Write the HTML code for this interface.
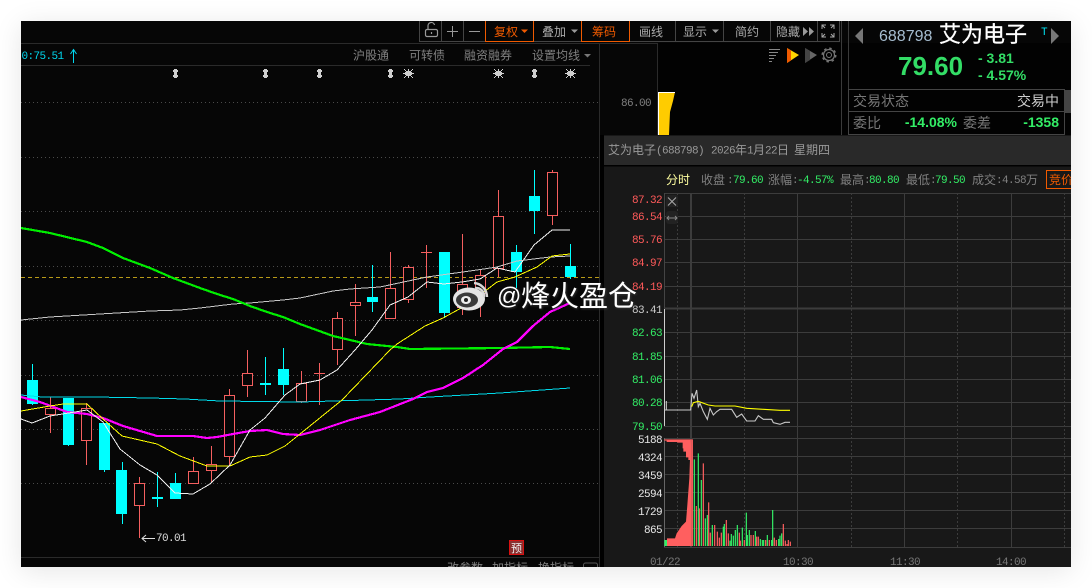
<!DOCTYPE html>
<html><head><meta charset="utf-8"><style>
html,body{margin:0;padding:0;background:#fff;width:1092px;height:588px;overflow:hidden}
#s{position:absolute;left:21px;top:21px;width:1050px;height:546px;box-shadow:0 4px 26px rgba(0,0,0,.1)}
svg{position:absolute;left:0;top:0}
text{font-family:"WenQuanYi Zen Hei","Noto Sans CJK SC",sans-serif;font-size:12px;fill:#808080}
.m{font-family:"Liberation Mono",monospace;font-size:11px;letter-spacing:-.6px}
.r{fill:#ff5a5a}.g{fill:#33ee66}.w{fill:#e8e8e8}.e{text-anchor:end}
.t{fill:#aaa;font-size:12px;text-anchor:middle}.o{fill:#f05a00}
.cr{shape-rendering:crispEdges}
</style></head><body><div id="s"></div>
<svg width="1092" height="588" viewBox="0 0 1092 588">
<defs><clipPath id="c"><rect x="21" y="21" width="1050" height="546"/></clipPath></defs>
<g clip-path="url(#c)">
<rect x="21" y="21" width="1050" height="546" fill="#060606"/>
<rect x="657" y="43" width="415" height="92" fill="#020202"/>
<g class="cr" stroke="#2a2a2a" fill="none">
<path d="M21 43.5H657M21 65.5H590M599.5 43V567M657.5 43V135M21 557.5H603"/>
<path d="M841.5 21V135M848.5 21V135" stroke="#3a3a3a"/>
</g>
<g stroke="#4a4a4a" stroke-dasharray="1 3" class="cr">
<path d="M21 102.5H600M21 157.5H600M21 211.5H600M21 266.5H600M21 320.5H600M21 375.5H600M21 429.5H600M21 483.5H600"/>
</g>
<path d="M21 277.5H600" stroke="#b89a18" stroke-dasharray="4 3" class="cr"/>

<!-- toolbar -->
<g class="cr" fill="none" stroke="#444">
<path d="M419.5 21V41.5H840M441.5 21V41M463.5 21V41M485.5 21V41M533.5 21V41M581.5 21V41M629.5 21V41M675.5 21V41M723.5 21V41M770.5 21V41M817.5 21V41M839.5 21V41"/>
<path d="M485.5 21V41.5H533.5V21M581.5 21V41.5H629.5V21" stroke="#f05a00"/>
</g>
<g fill="none" stroke="#999" stroke-width="1.2">
<rect x="425.5" y="29.5" width="12" height="7" rx="1.5"/>
<path d="M428 29V25.5a3.3 3.3 0 0 1 6.5-.5"/><path d="M431.5 32v2"/>
<path d="M447 31.500H458M452.500 26V37M469 31.500H480" stroke-width="1"/>
<path d="M822 29v-4h4M830 25h4v4M822 33v4h4M834 33v4h-4M822 25l3 3M834 25l-3 3M822 37l3-3M834 37l-3-3" stroke-width="1" stroke="#aaa"/>
</g>
<text class="t o" x="506" y="36">复权</text><path d="M521 29.500h7l-3.500 3.500z" fill="#f05a00"/>
<text class="t" x="554" y="36">叠加</text><path d="M571 29.500h7l-3.500 3.500z" fill="#999"/>
<text class="t o" x="604" y="36">筹码</text>
<text class="t" x="651" y="36">画线</text>
<text class="t" x="695" y="36">显示</text><path d="M712 29.500h7l-3.500 3.500z" fill="#999"/>
<text class="t" x="747" y="36">简约</text>
<text class="t" x="788" y="36">隐藏</text><path d="M803 27v9l5-4.500zM809 27v9l5-4.500z" fill="#999"/>

<!-- sub header -->
<text class="m" x="21.500" y="59" style="fill:#00d8f0">0:75.51</text>
<path d="M73.500 49.500V63M70.500 54l3-4.500l3 4.500" stroke="#00d8f0" fill="none"/>
<text x="353" y="59.500">沪股通</text><text x="409" y="59.500">可转债</text><text x="464" y="59.500">融资融券</text><text x="532" y="59.500">设置均线</text>
<path d="M584 54h7l-3.500 3.500z" fill="#777"/>

<!-- markers -->
<g fill="#cfcfcf" class="cr">
<path id="d" d="M173 70h1v-1h3v1h1v2h-1v3h1v2h-1v1h-3v-1h-1v-2h1v-3h-1z"/>
<path d="M263 70h1v-1h3v1h1v2h-1v3h1v2h-1v1h-3v-1h-1v-2h1v-3h-1zM317 70h1v-1h3v1h1v2h-1v3h1v2h-1v1h-3v-1h-1v-2h1v-3h-1zM388 70h1v-1h3v1h1v2h-1v3h1v2h-1v1h-3v-1h-1v-2h1v-3h-1zM532 70h1v-1h3v1h1v2h-1v3h1v2h-1v1h-3v-1h-1v-2h1v-3h-1z"/>
<path d="M406 71h5v5h-5zM405 72h7v3h-7zM404 69h1v1h1v1h-1v-1h-1zM412 69h1v1h-1v1h-1v-1h1zM408 69h1v9h-1zM404 77h1v-1h1v1h-1v1h-1zM412 77h1v1h-1v-1h-1v-1h1zM403 73h11v1h-11z"/>
<path d="M496 71h5v5h-5zM495 72h7v3h-7zM494 69h1v1h1v1h-1v-1h-1zM502 69h1v1h-1v1h-1v-1h1zM498 69h1v9h-1zM494 77h1v-1h1v1h-1v1h-1zM502 77h1v1h-1v-1h-1v-1h1zM493 73h11v1h-11z"/>
<path d="M568 71h5v5h-5zM567 72h7v3h-7zM566 69h1v1h1v1h-1v-1h-1zM574 69h1v1h-1v1h-1v-1h1zM570 69h1v9h-1zM566 77h1v-1h1v1h-1v1h-1zM574 77h1v1h-1v-1h-1v-1h1zM565 73h11v1h-11z"/>
</g>

<!-- candles -->
<g class="cr" stroke="#00ffff" fill="none">
<path d="M32.500 364V405M68.500 398V446M104.500 423V472M122.500 462V524M157.500 472V507M175.500 473V499M265.500 357V395M283.500 348V395M372.500 265V312M444.500 252V318M516.500 245V288M534.500 170V234M570.500 244V279"/>
</g>
<g class="cr" fill="#00ffff">
<rect x="27" y="380" width="11" height="24"/><rect x="63" y="398" width="11" height="47"/><rect x="99" y="423" width="11" height="47"/><rect x="116" y="470" width="11" height="44"/><rect x="152" y="497" width="11" height="2"/><rect x="170" y="483" width="11" height="16"/><rect x="260" y="383" width="11" height="2"/><rect x="278" y="369" width="11" height="16"/><rect x="367" y="297" width="11" height="5"/><rect x="439" y="252" width="11" height="61"/><rect x="511" y="252" width="11" height="20"/><rect x="529" y="196" width="11" height="15"/><rect x="565" y="266" width="11" height="11"/>
</g>
<g class="cr" stroke="#f55f5f" fill="none">
<path d="M50.500 397V433M86.500 403V465M139.500 477V538M193.500 457V483M211.500 446V483M229.500 389V465M247.500 350V397M301.500 371V403M319.500 363V405M337.500 312V365M355.500 284V336M390.500 252V318M408.500 265V303M426.500 245V288M462.500 234V315M480.500 270V317M498.500 190V277M552.500 170V225M314 373.500H325M421 252.500H432"/>
</g>
<g class="cr" stroke="#f55f5f" fill="#060606">
<rect x="45.500" y="408.500" width="10" height="6"/><rect x="81.500" y="408.500" width="10" height="32"/><rect x="134.500" y="483.500" width="10" height="22"/><rect x="188.500" y="471.500" width="10" height="12"/><rect x="206.500" y="464.500" width="10" height="6"/><rect x="224.500" y="395.500" width="10" height="61"/><rect x="242.500" y="373.500" width="10" height="12"/><rect x="296.500" y="383.500" width="10" height="18"/><rect x="332.500" y="318.500" width="10" height="31"/><rect x="350.500" y="302.500" width="10" height="3"/><rect x="385.500" y="288.500" width="10" height="30"/><rect x="403.500" y="267.500" width="10" height="32"/><rect x="457.500" y="284.500" width="10" height="23"/><rect x="475.500" y="275.500" width="10" height="18"/><rect x="493.500" y="216.500" width="10" height="52"/><rect x="547.500" y="172.500" width="10" height="43"/>
</g>

<!-- MA lines -->
<g fill="none" class="cr">
<polyline stroke="#00d8e8" points="21,395 42,397 95,397 150,398 185,399 220,401 300,402 400,399 430,397 500,393 570,388"/>
<polyline stroke="#c8c8c8" points="21,320 50,317 100,314 150,311 180,310 200,308 233,304 250,303 283,300 300,298 333,291 350,289 380,287 427,277 477,270 497,267 517,261 550,257 570,256"/>
<polyline stroke="#00ee00" stroke-width="2.200" points="21,228 50,233 87,242 103,248 123,258 150,268 173,278 200,288 217,294 233,299 250,306 267,312 283,317 300,324 333,336 350,340 367,344 397,347 410,349 500,348 550,347 570,349"/>
<polyline stroke="#ff00ff" stroke-width="2.200" points="21,397 40,402 67,412 87,414 103,418 123,426 157,436 193,436 207,438 217,437 233,434 250,431 267,430 283,434 300,435 320,430 350,420 380,412 413,399 427,392 443,388 463,378 483,365 503,349 517,342 533,326 550,312 570,303"/>
<polyline stroke="#ffff00" points="21,411 50,406 63,404 87,404 103,419 122,436 157,444 180,456 207,466 230,466 250,457 267,455 285,446 300,434 342,400 390,350 397,344 425,326 443,318 463,307 480,295 497,282 515,277 537,267 552,256 570,254"/>
<polyline stroke="#f0f0f0" points="21,419 32,423 50,416 75,412 87,410 103,422 120,449 140,465 157,475 175,493 193,494 210,484 230,465 250,430 265,418 285,395 300,384 320,380 337,370 355,350 372,330 390,305 408,297 427,282 444,284 462,282 480,279 497,268 515,272 534,245 552,230 570,230"/>
</g>
<path d="M142 538.500H155M146 535l-4 3.500l4 3.500" stroke="#ddd" fill="none"/>
<text class="m" x="156" y="541" style="fill:#ddd">70.01</text>
<text class="m" x="621" y="106">86.00</text>
<path d="M658 92H675L673 101L670 112L669 135H658Z" fill="#ffcc00"/>
<path d="M658.500 135V92.500H675" stroke="#fff" fill="none" class="cr"/>
<rect x="509.500" y="540.500" width="14" height="14" fill="#8a2f2f" stroke="#d81010" class="cr"/>
<text x="511" y="552" style="font-size:11px;fill:#eee">预</text>
<text x="447" y="572">改参数</text><text x="492" y="572">加指标</text><text x="538" y="572">换指标</text>
<rect x="583.500" y="563" width="14" height="12" rx="2" fill="none" stroke="#555"/>

<!-- top right icons -->
<path d="M769 49.500H780M769 52.500H778M769 55.500H776M769 58.500H774M769 61.500H772" stroke="#888" class="cr"/>
<path d="M787 48L799 55L787 63Z" fill="#ffd400"/><path d="M787 48L791 50.500V60.500L787 63Z" fill="#f05a00"/>
<path d="M805 48L817 55L805 63Z" fill="#666"/><path d="M805 48L810 51V60L805 63Z" fill="#444"/>
<g fill="none" stroke="#777"><circle cx="829" cy="55" r="5.500" stroke-width="1.200"/><circle cx="829" cy="55" r="6.800" stroke-width="1.400" stroke-dasharray="2.500 2.840"/><circle cx="829" cy="55" r="2.500"/></g>

<!-- right quote panel -->
<path d="M863 28V44L855 36Z" fill="#777"/><path d="M1051 28V44L1059 36Z" fill="#777"/>
<text x="879" y="41" style="font-family:'Liberation Sans',sans-serif;font-size:16px;fill:#a6bdd0">688798</text>
<text x="939" y="42" style="font-size:22px;fill:#fff;stroke:#fff;stroke-width:.3px">艾为电子</text>
<text x="1041" y="35" style="font-family:'Liberation Mono',monospace;font-size:11px;fill:#00e0f0">T</text>
<text x="898" y="75" style="font-family:'Liberation Sans',sans-serif;font-weight:700;font-size:26px;fill:#33dd66">79.60</text>
<text x="978" y="63" style="font-family:'Liberation Sans',sans-serif;font-weight:700;font-size:14px;fill:#33dd66">- 3.81</text>
<text x="978" y="80" style="font-family:'Liberation Sans',sans-serif;font-weight:700;font-size:14px;fill:#33dd66">- 4.57%</text>
<g class="cr" fill="none" stroke="#444"><rect x="848.500" y="89.500" width="216" height="45"/><path d="M848 111.500H1065"/></g>
<rect x="1065" y="90" width="6" height="23" fill="#444"/>
<text x="853" y="106" style="font-size:14px;fill:#777">交易状态</text>
<text x="1017" y="106" style="font-size:14px;fill:#ccc">交易中</text>
<text x="853" y="128" style="font-size:14px;fill:#777">委比</text>
<text x="963" y="128" style="font-size:14px;fill:#777">委差</text>
<text x="957" y="127" text-anchor="end" style="font-family:'Liberation Sans',sans-serif;font-weight:700;font-size:14px;fill:#33ee66">-14.08%</text>
<text x="1059" y="127" text-anchor="end" style="font-family:'Liberation Sans',sans-serif;font-weight:700;font-size:14px;fill:#33ee66">-1358</text>

<!-- popup -->
<rect x="600" y="135" width="4" height="432" fill="#000"/>
<rect x="604" y="135" width="467" height="432" fill="#181818"/>
<rect x="604" y="136" width="467" height="29" fill="#292929"/>
<rect x="604" y="165" width="467" height="1.500" fill="#000"/>
<text x="608" y="154" style="fill:#999">艾为电子</text>
<text class="m" x="656" y="153.500" style="fill:#999">(688798)</text>
<text class="m" x="711" y="153.500" style="fill:#999">2026</text><text x="735" y="154" style="fill:#999">年</text>
<text class="m" x="747" y="153.500" style="fill:#999">1</text><text x="753" y="154" style="fill:#999">月</text>
<text class="m" x="765" y="153.500" style="fill:#999">22</text><text x="777" y="154" style="fill:#999">日</text>
<text x="794" y="154" style="fill:#999">星期四</text>
<text x="666" y="184" style="fill:#ffffa0">分时</text>
<text x="701" y="184">收盘</text><text class="m" x="727" y="183">:</text><text class="m g" x="733" y="183">79.60</text>
<text x="768" y="184">涨幅</text><text class="m" x="792" y="183">:</text><text class="m g" x="797" y="183">-4.57%</text>
<text x="840" y="184">最高</text><text class="m" x="864" y="183">:</text><text class="m g" x="869" y="183">80.80</text>
<text x="906" y="184">最低</text><text class="m" x="930" y="183">:</text><text class="m g" x="935" y="183">79.50</text>
<text x="972" y="184">成交</text><text class="m" x="996" y="183">:4.58</text><text x="1026" y="184">万</text>
<rect x="1046.500" y="170.500" width="30" height="18" fill="none" stroke="#f05a00" class="cr"/>
<text x="1049" y="184" style="fill:#f05a00">竞价</text>

<g class="cr" stroke="#3c3c3c" fill="none">
<path d="M664 193.500H1071M664 216.500H1071M664 239.500H1071M664 262.500H1071M664 286.500H1071M664 332.500H1071M664 356.500H1071M664 379.500H1071M664 402.500H1071M664 426.500H1071M664 438.500H1071M664 456.500H1071M664 474.500H1071M664 492.500H1071M664 510.500H1071M664 528.500H1071M664 547.500H1071"/>
<path d="M664 308.500H1071" stroke-width="2"/>
<path d="M690.500 193V547M691.500 193V547M797.500 193V547M904.500 193V547M1011.500 193V547"/>
<path d="M677.500 193V547M744.500 193V547M851.500 193V547M957.500 193V547M1064.500 193V547" stroke-dasharray="2 2"/>
<path d="M664.500 193V308" stroke="#444"/><path d="M664.500 309V426" stroke="#cfcfcf"/><path d="M664.500 438V547" stroke="#666"/>
</g>
<rect x="666" y="195" width="12" height="12" rx="2" fill="#222"/>
<path d="M668 197.500L676 205.500M676 197.500L668 205.500" stroke="#aaa"/>
<rect x="666" y="211" width="12" height="13" rx="3" fill="#222"/>
<path d="M667 218H677M669 216l-2 2l2 2M675 216l2 2l-2 2" stroke="#888" fill="none"/>

<text class="m e r" x="662" y="203">87.32</text><text class="m e r" x="662" y="220">86.54</text><text class="m e r" x="662" y="243">85.76</text><text class="m e r" x="662" y="266">84.97</text><text class="m e r" x="662" y="290">84.19</text>
<text class="m e" x="662" y="313" style="fill:#ccc">83.41</text>
<text class="m e g" x="662" y="336">82.63</text><text class="m e g" x="662" y="360">81.85</text><text class="m e g" x="662" y="383">81.06</text><text class="m e g" x="662" y="406">80.28</text><text class="m e g" x="662" y="430">79.50</text>
<text class="m e w" x="662" y="443">5188</text><text class="m e w" x="662" y="461">4324</text><text class="m e w" x="662" y="479">3459</text><text class="m e w" x="662" y="497">2594</text><text class="m e w" x="662" y="515">1729</text><text class="m e w" x="662" y="533">865</text>
<text class="m" x="650" y="565" style="fill:#777">01/22</text><text class="m" x="783" y="565" style="fill:#777">10:30</text><text class="m" x="890" y="565" style="fill:#777">11:30</text><text class="m" x="996" y="565" style="fill:#777">14:00</text>

<!-- intraday -->
<g transform="translate(600,370) scale(.33333)" fill="none">
<path d="M193 120H199V93V120H272V120L276 70L282 85L290 60L295 110L300 100L310 125L322 148L330 115L340 135L350 125L360 118H395L410 142L425 132L440 153H465L475 137L490 148H515L520 158L540 163L555 157H570" stroke="#c8c8c8" stroke-width="3.300"/>
<path d="M275 110L280 98L295 94L325 105L345 108H405L440 115L490 118L540 121H570" stroke="#ffff00" stroke-width="3.300"/>
<path d="M193 528V510H201V528Z" fill="#33ee66"/>
<path d="M201 528V505H225L230 490L245 468L258 455L262 405L268 325L272 208H275V528Z" fill="#ff5f5f"/>
<path d="M193 208H272V270H265V262H258V245H250V235H248V218H232V216H200V212H193Z" fill="#ff5f5f"/>
<path d="M277 528V208M289 528V408M298 528V415M310 528V280M326 528V397M331 528V488M344 528V465M352 528V485M358 528V503M364 528V488M379 528V450M385 528V490M418 528V488M421 528V512M433 528V510M453 528V495M460 528V495M470 528V500M475 528V500M497 528V510M508 528V510M523 528V503M529 528V510M550 528V462M556 528V512M561 528V522M565 528V510M571 528V515" stroke="#ff5f5f" stroke-width="3.600"/>
<path d="M283 528V268M295 528V250M304 528V330M316 528V445M322 528V435M337 528V465M370 528V470M373 528V462M390 528V512M394 528V492M400 528V497M406 528V480M412 528V465M427 528V473M439 528V428M442 528V495M448 528V480M466 528V483M481 528V507M487 528V510M491 528V510M502 528V495M515 528V510M518 528V420M536 528V507M540 528V497M545 528V490" stroke="#33ee66" stroke-width="3.600"/>
</g>

<!-- watermark -->
<g>
<ellipse cx="469" cy="299" rx="16" ry="11.500" fill="#e4e4e4"/>
<ellipse cx="467" cy="300" rx="11" ry="7.500" fill="#3a3a3a"/>
<ellipse cx="466" cy="300" rx="5" ry="4" fill="#eee"/><circle cx="466" cy="300" r="2" fill="#222"/>
<path d="M475 288a8 8 0 0 1 9 9M474 283a14 14 0 0 1 13 14" stroke="#d8d8d8" stroke-width="2.400" fill="none"/>
<g style="filter:drop-shadow(1px 1px 1px rgba(60,60,60,.8))">
<text x="497" y="304" style="font-family:'Liberation Sans',sans-serif;font-size:24px;fill:#fff">@</text>
<text x="521" y="306" style="font-family:'Noto Sans CJK SC',sans-serif;font-size:29px;fill:#fff">烽火盈仓</text>
</g></g>
</g>
</svg>
</body></html>
